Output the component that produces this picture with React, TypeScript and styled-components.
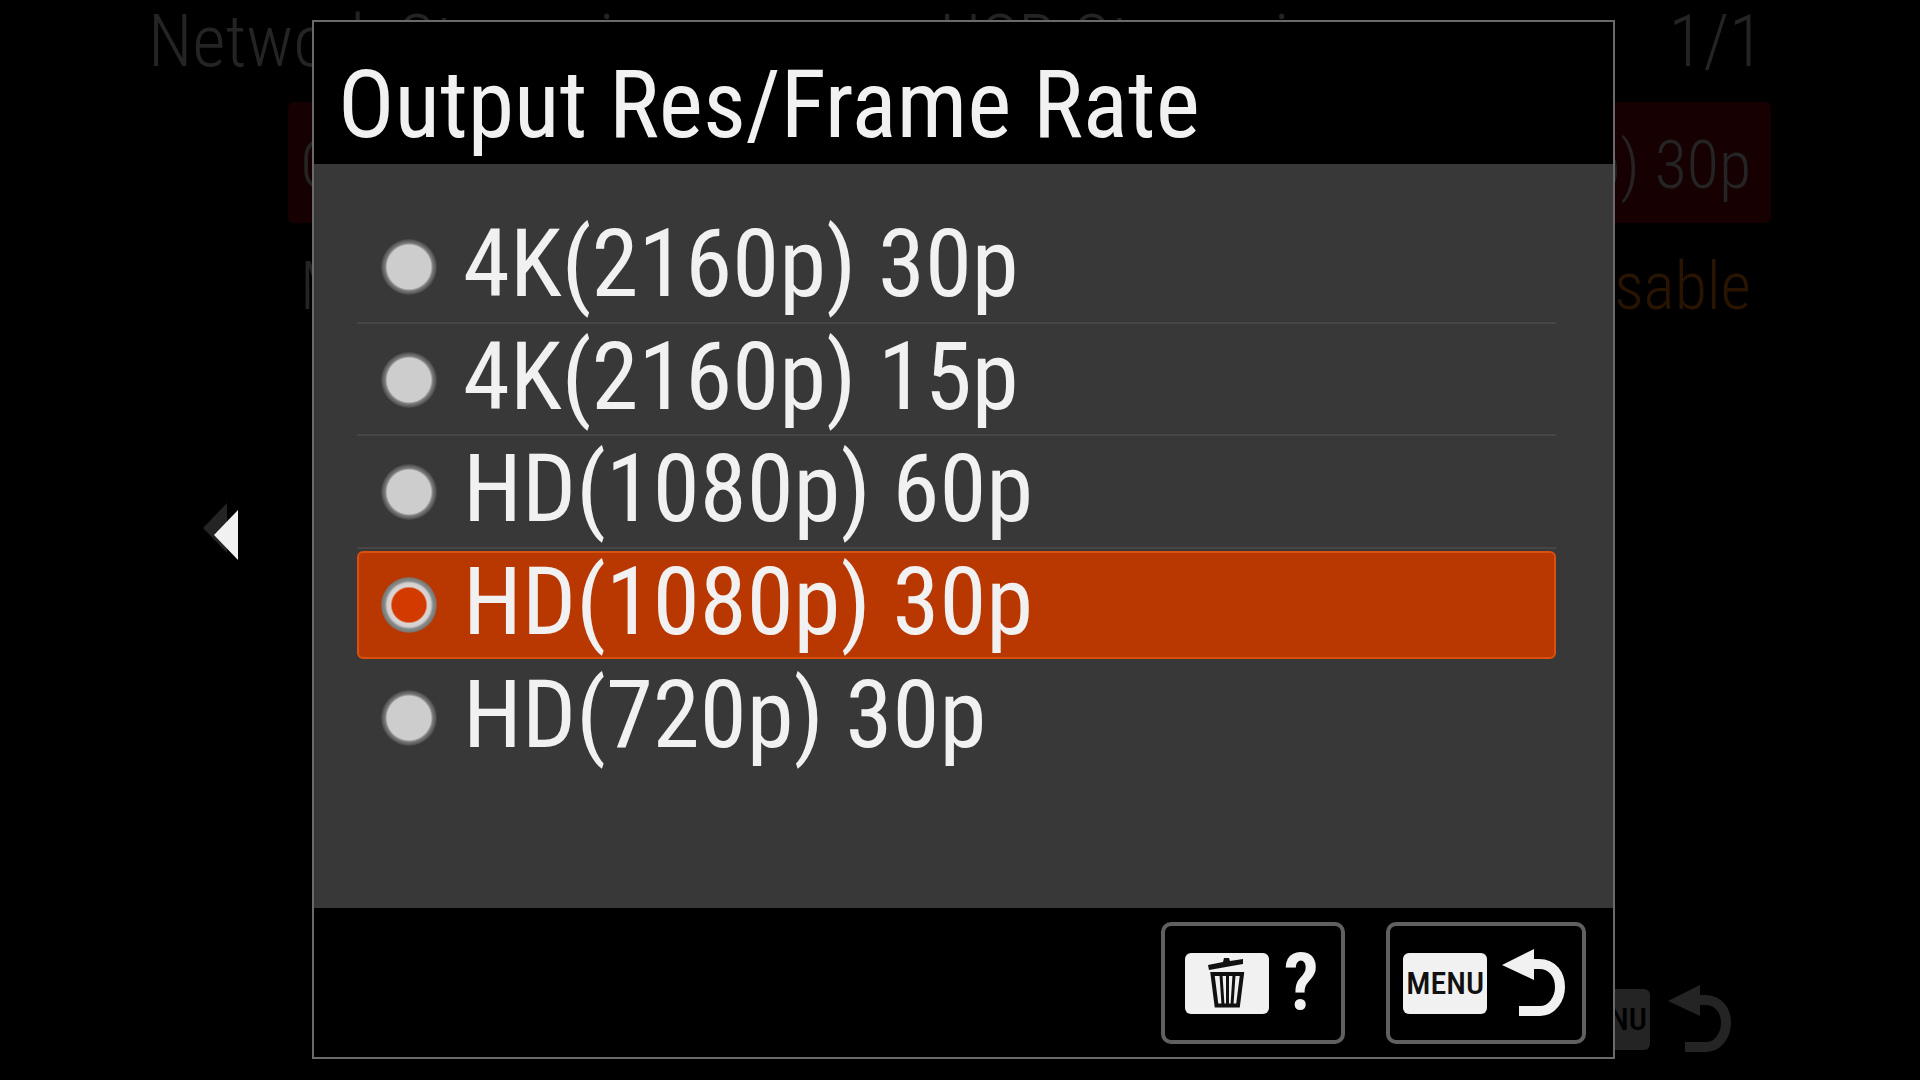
import React, { useState } from 'react';
import styled, { createGlobalStyle } from 'styled-components';

const GlobalStyle = createGlobalStyle`
  *, *::before, *::after { box-sizing: border-box; }
  html, body, #root { height: 100%; }
  body {
    margin: 0;
    overflow: hidden;
    background: #000;
    font-family: "Roboto Condensed", Roboto, "Liberation Sans", sans-serif;
  }
`;

const Screen = styled.div`
  position: relative;
  height: 100%;
  background: #000;
  color: #242424;
`;

/* Dimmed menu page behind the dialog */
const MenuPage = styled.div`
  height: 100%;
  display: flex;
  flex-direction: column;
  font-weight: 300;
`;

const MenuHeader = styled.header`
  display: grid;
  grid-template-columns: 49% 1fr auto;
  height: 102px;
  padding: 0 156px 18px 148px;
  font-size: 72px;
  line-height: 84px;
  white-space: nowrap;
`;

const MenuHeading = styled.span``;

const MenuMain = styled.div`
  flex: 1;
  display: grid;
  grid-template-columns: 15% 1fr 149px;
`;

const PageArrow = styled.div`
  display: flex;
  align-items: center;
  justify-content: flex-end;
  padding-right: 61px;
`;

const MenuList = styled.dl`
  margin: 0;
`;

const MenuItem = styled.div<{ $active?: boolean }>`
  display: flex;
  align-items: center;
  justify-content: space-between;
  height: 121px;
  padding: 6px 20px 0 12px;
  border-radius: 6px;
  background: ${(p) => (p.$active ? '#170002' : 'transparent')};
  font-size: 66px;
`;

const MenuTerm = styled.dt``;

const MenuValue = styled.dd<{ $warn?: boolean }>`
  margin: 0;
  color: ${(p) => (p.$warn ? '#281400' : 'inherit')};
`;

const MenuFooter = styled.footer`
  display: flex;
  align-items: center;
  justify-content: flex-end;
  gap: 18px;
  height: 126px;
  padding: 4px 188px 0 0;
`;

/* Dialog layer */
const Overlay = styled.div`
  position: absolute;
  inset: 0;
  display: grid;
  grid-template-columns: 16.25% 1fr 15.9%;
  padding: 20px 0 21px;
`;

const BackArrow = styled.button`
  align-self: center;
  justify-self: end;
  display: flex;
  margin: 0;
  padding: 0 74px 10px 0;
  border: 0;
  background: none;
`;

const Dialog = styled.form`
  display: flex;
  flex-direction: column;
  border: 2px solid #6a6a6a;
  background: #000;
  color: #f1f1f1;
`;

const DialogTitle = styled.h1`
  height: 142px;
  margin: 0;
  padding: 22px 24px 0;
  font-size: 94px;
  font-weight: 400;
  line-height: 122px;
  white-space: nowrap;
`;

const DialogBody = styled.div`
  flex: 1;
  padding: 45px 57px 0 43px;
  background: #383838;
`;

const Options = styled.fieldset`
  display: grid;
  grid-template-rows: repeat(5, 1fr);
  height: 563px;
  margin: 0;
  padding: 0;
  border: 0;
`;

const Option = styled.label`
  display: flex;
  align-items: center;
  gap: 26px;
  padding: 0 22px;
  border: 2px solid transparent;
  border-radius: 6px;
  font-size: 95px;
  line-height: 90px;
  white-space: nowrap;
`;

const OptionRow = styled.div<{ $active: boolean; $divided: boolean }>`
  display: grid;
  padding-top: 2px;
  border-top: 2px solid ${(p) => (p.$divided ? '#464646' : 'transparent')};

  ${Option} {
    background: ${(p) => (p.$active ? '#b93700' : 'transparent')};
    border-color: ${(p) => (p.$active ? '#d9500f' : 'transparent')};
  }
`;

const OptionRadio = styled.input`
  appearance: none;
  flex: none;
  width: 56px;
  height: 56px;
  margin: 0;
  border-radius: 50%;
  background: radial-gradient(circle closest-side, #cdcdcd 78%, #7c7c7c 85%, #5c5c5c 94%, #444 100%);

  &:checked {
    background: radial-gradient(circle closest-side, #d23a00 60%, #dcd4d2 66%, #d4d0d0 78%, #868c8c 86%, #7c7874 96%, #8e5a40 100%);
  }
`;

const OptionText = styled.span`
  padding-bottom: 6px;
`;

const DialogFooter = styled.footer`
  display: flex;
  align-items: center;
  justify-content: flex-end;
  gap: 41px;
  height: 149px;
  padding: 1px 27px 0;
`;

const KeyButton = styled.button<{ $width: number }>`
  display: flex;
  align-items: center;
  justify-content: center;
  gap: 15px;
  width: ${(p) => p.$width}px;
  height: 122px;
  padding: 0 2px 0 0;
  border: 4px solid #606060;
  border-radius: 10px;
  background: #000;
  color: #f1f1f1;
  font-family: inherit;
`;

const KeyCap = styled.span<{ $dim?: boolean }>`
  display: flex;
  align-items: center;
  justify-content: center;
  width: 84px;
  height: 61px;
  border-radius: 6px;
  background: ${(p) => (p.$dim ? '#242424' : '#f1f1f1')};
  color: ${(p) => (p.$dim ? '#000' : '#111')};
  font-size: 32px;
  font-weight: 500;
  line-height: 60px;
`;

const HelpMark = styled.span`
  font-size: 80px;
  font-weight: 600;
  line-height: 80px;
`;

const LeftTriangle = ({ color }: { color: string }) => (
  <svg width="24" height="50" viewBox="0 0 24 50" aria-hidden="true">
    <path d="M24 0V50L0 25Z" fill={color} />
  </svg>
);

const ReturnIcon = ({ color }: { color: string }) => (
  <svg width="64" height="68" viewBox="0 0 64 68" aria-hidden="true">
    <path d="M0 16L32 0V31Z" fill={color} />
    <path d="M30 15H37C51 15 58 26 58 38C58 50 50 62 38 62H17" fill="none" stroke={color} strokeWidth="10" />
  </svg>
);

const TrashIcon = () => (
  <svg width="38" height="50" viewBox="0 0 38 50" aria-hidden="true">
    <path d="M0 7L15 4L16 0L21 0L22 3L35 1V6L1 12Z" fill="#111" />
    <path d="M4.5 16H34L30 47.500H8.500Z" fill="none" stroke="#111" strokeWidth="4" />
    <path d="M13 17L15 47M19.500 17V47M26 17L24 47" fill="none" stroke="#111" strokeWidth="3" />
  </svg>
);

const OPTIONS = ['4K(2160p) 30p', '4K(2160p) 15p', 'HD(1080p) 60p', 'HD(1080p) 30p', 'HD(720p) 30p'];

export default function App() {
  const [selected, setSelected] = useState('HD(1080p) 30p');
  const selectedIndex = OPTIONS.indexOf(selected);

  return (
    <>
      <GlobalStyle />
      <Screen>
        <MenuPage aria-hidden="true">
          <MenuHeader>
            <MenuHeading>Network Streaming</MenuHeading>
            <MenuHeading>USB Streaming</MenuHeading>
            <MenuHeading>1/1</MenuHeading>
          </MenuHeader>
          <MenuMain>
            <PageArrow>
              <LeftTriangle color="#242424" />
            </PageArrow>
            <MenuList>
              <MenuItem $active>
                <MenuTerm>Output Res/Frame Rate</MenuTerm>
                <MenuValue>{selected}</MenuValue>
              </MenuItem>
              <MenuItem>
                <MenuTerm>Movie Rec</MenuTerm>
                <MenuValue $warn>Disable</MenuValue>
              </MenuItem>
            </MenuList>
          </MenuMain>
          <MenuFooter>
            <KeyCap $dim>MENU</KeyCap>
            <ReturnIcon color="#242424" />
          </MenuFooter>
        </MenuPage>

        <Overlay>
          <BackArrow type="button" aria-label="Back">
            <LeftTriangle color="#f1f1f1" />
          </BackArrow>
          <Dialog onSubmit={(e) => e.preventDefault()}>
            <DialogTitle>Output Res/Frame Rate</DialogTitle>
            <DialogBody>
              <Options aria-label="Output Res/Frame Rate">
                {OPTIONS.map((option, index) => (
                  <OptionRow
                    key={option}
                    $active={option === selected}
                    $divided={index > 0 && index !== selectedIndex + 1}
                  >
                    <Option>
                      <OptionRadio
                        type="radio"
                        name="resolution"
                        value={option}
                        checked={option === selected}
                        onChange={() => setSelected(option)}
                      />
                      <OptionText>{option}</OptionText>
                    </Option>
                  </OptionRow>
                ))}
              </Options>
            </DialogBody>
            <DialogFooter>
              <KeyButton type="button" $width={184} aria-label="Help">
                <KeyCap>
                  <TrashIcon />
                </KeyCap>
                <HelpMark>?</HelpMark>
              </KeyButton>
              <KeyButton type="button" $width={200}>
                <KeyCap>MENU</KeyCap>
                <ReturnIcon color="#f1f1f1" />
              </KeyButton>
            </DialogFooter>
          </Dialog>
        </Overlay>
      </Screen>
    </>
  );
}
